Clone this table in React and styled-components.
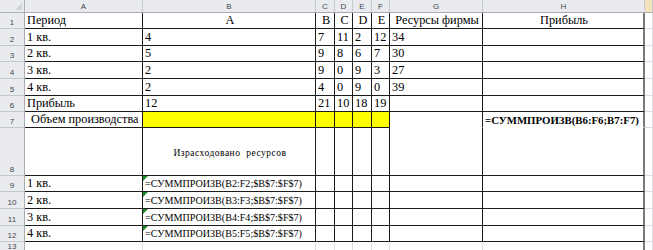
import styled, { createGlobalStyle } from "styled-components"

const GlobalStyle = createGlobalStyle`
  html, body {
    margin: 0;
    padding: 0;
    background: #ffffff;
  }
`

const Sheet = styled.div`
  display: grid;
  grid-template-columns: 25px 118px 173px 19px 18px 19px 18px 93px 162px 1fr;
  grid-template-rows: 13px 16px 17px 16px 17px 17px 16px 16px 48px 16px 17px 17px 16px 1fr;
  width: 653px;
  height: 250px;
  overflow: hidden;
  background: #ffffff;
`

const Corner = styled.div`
  position: relative;
  background: #e9ebee;
  border-right: 1px solid #a9adb3;
  border-bottom: 1px solid #a9adb3;

  &::after {
    content: "";
    position: absolute;
    right: 2px;
    bottom: 2px;
    border-left: 7px solid transparent;
    border-bottom: 7px solid #cfd2d6;
  }
`

const ColHead = styled.div`
  display: flex;
  align-items: center;
  justify-content: center;
  background: ${({ $active }) => ($active ? "#f3e3bd" : "#e9ebee")};
  border-right: 1px solid #c5c8cc;
  border-bottom: 1px solid #a9adb3;
  font-family: "Liberation Sans", Arial, sans-serif;
  font-size: 8px;
  color: #3f4650;
`

const RowHead = styled.div`
  display: flex;
  align-items: flex-end;
  justify-content: center;
  padding-bottom: 1px;
  box-sizing: border-box;
  background: #e9ebee;
  border-right: 1px solid #a9adb3;
  border-bottom: 1px solid #c5c8cc;
  font-family: "Liberation Sans", Arial, sans-serif;
  font-size: 8px;
  color: #3f4650;
`

const Cell = styled.div`
  position: relative;
  display: flex;
  align-items: ${({ $middle }) => ($middle ? "center" : "flex-end")};
  justify-content: ${({ $align }) =>
    $align === "center" ? "center" : "flex-start"};
  box-sizing: border-box;
  padding: 0 0 0 ${({ $indent }) => ($indent ? "6px" : "2px")};
  background: ${({ $fill }) => $fill || "#ffffff"};
  border-right: ${({ $right }) => $right || "1px solid #dadcdf"};
  border-bottom: ${({ $bottom }) => $bottom || "1px solid #dadcdf"};
  font-family: "Liberation Serif", "Times New Roman", serif;
  font-size: 12.3px;
  line-height: 15px;
  color: #000000;
  white-space: nowrap;
  overflow: visible;
  z-index: ${({ $over }) => ($over ? 1 : 0)};
`

const Formula = styled.span`
  font-size: ${({ $bold }) => ($bold ? "10.8px" : "10.1px")};
  font-weight: ${({ $bold }) => ($bold ? "bold" : "normal")};
  line-height: 14px;
`

const Caption = styled.span`
  font-size: 9.5px;
  letter-spacing: 0.5px;
  word-spacing: 3px;
  margin-top: 4px;
`

const ErrorMark = styled.span`
  position: absolute;
  left: 0;
  top: 0;
  border-top: 5px solid #1f8a2e;
  border-right: 5px solid transparent;
`

const LINE = "1px solid #1c1c1c"
const EDGE = "2px solid #7a7a7a"
const YELLOW = "#ffff00"

const columns = ["A", "B", "C", "D", "E", "F", "G", "H", ""]

const formula = (n) => `=СУММПРОИЗВ(B${n}:F${n};$B$7:$F$7)`

const rows = [
  { n: 1, cells: ["Период", "A", "B", "C", "D", "E", "Ресурсы фирмы", "Прибыль"], center: [1, 2, 3, 4, 5, 6, 7] },
  { n: 2, cells: ["1 кв.", "4", "7", "11", "2", "12", "34", ""] },
  { n: 3, cells: ["2 кв.", "5", "9", "8", "6", "7", "30", ""] },
  { n: 4, cells: ["3 кв.", "2", "9", "0", "9", "3", "27", ""] },
  { n: 5, cells: ["4 кв.", "2", "4", "0", "9", "0", "39", ""] },
  { n: 6, cells: ["Прибыль", "12", "21", "10", "18", "19", "", ""] },
  { n: 7, cells: ["Объем производства", "", "", "", "", "", "", "bold"], yellow: true },
  { n: 8, cells: ["", "caption", "", "", "", "", "", ""] },
  { n: 9, cells: ["1 кв.", "f2", "", "", "", "", "", ""] },
  { n: 10, cells: ["2 кв.", "f3", "", "", "", "", "", ""] },
  { n: 11, cells: ["3 кв.", "f4", "", "", "", "", "", ""] },
  { n: 12, cells: ["4 кв.", "f5", "", "", "", "", "", ""] },
  { n: 13, cells: ["", "", "", "", "", "", "", ""], empty: true },
]

const renderContent = (value) => {
  if (value === "bold") return <Formula $bold>=СУММПРОИЗВ(B6:F6;B7:F7)</Formula>
  if (value === "caption") return <Caption>Израсходовано ресурсов</Caption>
  if (/^f\d$/.test(value))
    return (
      <>
        <ErrorMark />
        <Formula>{formula(value.slice(1))}</Formula>
      </>
    )
  return value
}

export default function App() {
  return (
    <>
      <GlobalStyle />
      <Sheet>
        <Corner />
        {columns.map((c, i) => (
          <ColHead key={c + i} $active={i === 8}>
            {c}
          </ColHead>
        ))}

        {rows.map((row) => (
          <Row key={row.n} row={row} />
        ))}
      </Sheet>
    </>
  )
}

const Row = ({ row }) => {
  const { n, cells, center = [], yellow, empty } = row
  return (
    <>
      <RowHead>{n}</RowHead>
      {cells.map((value, i) => {
        const isH = i === 7
        let right = empty ? undefined : LINE
        if (isH) right = EDGE
        let bottom = empty ? undefined : LINE
        if (n === 7 && i >= 6) bottom = "1px solid #ffffff"
        return (
          <Cell
            key={i}
            $align={center.includes(i) || value === "caption" ? "center" : "left"}
            $middle={value === "caption"}
            $indent={n === 7 && i === 0}
            $fill={yellow && i >= 1 && i <= 5 ? YELLOW : undefined}
            $right={right}
            $bottom={bottom}
            $over={value.startsWith && value.startsWith("f")}
          >
            {renderContent(value)}
          </Cell>
        )
      })}
      <Cell />
    </>
  )
}
